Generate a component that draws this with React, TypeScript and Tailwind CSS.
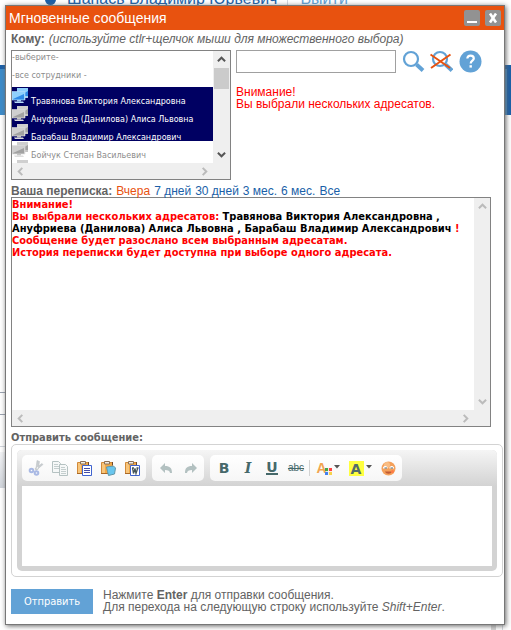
import type { ReactNode } from "react";
import { clsx } from "clsx";

type IconProps = { className?: string };

function Chevron({ dir, className }: { dir: "up" | "down" | "left" | "right"; className?: string }) {
  const points = {
    up: "1,7 5,3 9,7",
    down: "1,3 5,7 9,3",
    left: "7,1 3,5 7,9",
    right: "3,1 7,5 3,9",
  }[dir];
  return (
    <svg viewBox="0 0 10 10" className={clsx("size-[9px]", className)} fill="none" stroke="currentColor" strokeWidth="2.2">
      <polyline points={points} />
    </svg>
  );
}

function ComputersIcon({ online }: { online?: boolean }) {
  const light = online ? "#8fd0fc" : "#cfcfcf";
  const dark = online ? "#2f8ae6" : "#a2a2a2";
  const stand = online ? "#a9cdee" : "#c4c4c4";
  const edge = online ? "#b8defa" : "#dedede";
  return (
    <svg viewBox="0 0 17 18" className="block h-[18px] w-[17px]">
      <path d="M5 1h11v8H5z" fill={light} />
      <path d="M7 9l9-5v5z" fill={dark} />
      <path d="M12 9h4v2h-4z" fill={stand} />
      <path d="M0 4.500h13v8.500H0z" fill={light} stroke={edge} strokeWidth="0.6" />
      <path d="M1 12l11-5v5.500H1z" fill={dark} />
      <path d="M5 13h4v1.500H5z" fill={stand} />
      <path d="M2 14.500h9l1 1.500H3z" fill={edge} />
    </svg>
  );
}

function SearchIcon() {
  return (
    <svg viewBox="0 0 23 23" className="size-[23px]" fill="none" stroke="#62a2d6">
      <circle cx="9" cy="9" r="7" strokeWidth="2.200" />
      <path d="M14.500 14.500L21 20.500" strokeWidth="4" />
    </svg>
  );
}

function ClearSearchIcon() {
  return (
    <svg viewBox="0 0 23 23" className="size-[23px]" fill="none">
      <circle cx="10" cy="9" r="7" stroke="#62a2d6" strokeWidth="2.200" />
      <path d="M15.500 14.500L22 20.500" stroke="#62a2d6" strokeWidth="4" />
      <path d="M0.500 4.500L20 18M20.500 4.500L1 18" stroke="#e8520f" strokeWidth="2" />
    </svg>
  );
}

function HelpIcon() {
  return (
    <svg viewBox="0 0 23 23" className="size-[23px]">
      <circle cx="11.500" cy="11.500" r="11" fill="#62a2d6" />
      <path d="M8.300 8.500C8.500 6.500 9.700 5.700 11.500 5.700c2 0 3.300 1 3.300 2.700 0 2.200-3.100 2.300-3.100 5" fill="none" stroke="#fff" strokeWidth="2.200" />
      <path d="M10.500 15.200h2.400v2.400h-2.400z" fill="#fff" />
    </svg>
  );
}

function CutIcon() {
  return (
    <svg viewBox="0 0 16 16" className="size-4" fill="none">
      <path d="M9 0.500l-1 8 2 1 1.500-8zM15 4.500L8 10.500l-1-2 7-5z" fill="#c9cdd0" stroke="#b9bfc2" strokeWidth="0.500" />
      <circle cx="3.500" cy="10.500" r="1.800" stroke="#a9b9e4" strokeWidth="2" />
      <circle cx="8.500" cy="13" r="1.800" stroke="#a9b9e4" strokeWidth="2" />
    </svg>
  );
}

function CopyIcon() {
  return (
    <svg viewBox="0 0 16 16" className="size-4" fill="#f6f8f8" stroke="#b5c2c2">
      <path d="M0.500 1.500h6l2 2v9h-8z" />
      <path d="M2 4.500h4M2 6.500h5M2 8.500h5" stroke="#c4cece" />
      <path d="M7.500 4.500h6l2 2v9h-8z" />
      <path d="M9 7.500h4M9 9.500h5M9 11.500h5M9 13.500h5" stroke="#c4cece" />
    </svg>
  );
}

function PasteIcon({ kind }: { kind: "text" | "plain" | "word" }) {
  return (
    <svg viewBox="0 0 16 16" className="size-4" fill="none">
      <path d="M1.500 2.500h11v11h-11z" fill="#f0a848" stroke="#d18a3a" />
      <path d="M2 3h3v10H2z" fill="#f8c67c" />
      <path d="M1 13.500h7" stroke="#a96826" />
      <path d="M12.500 2v3" stroke="#6d482d" />
      <path d="M4.500 4V1.500h5V4z" fill="#f4ece0" stroke="#8b7057" />
      {kind === "plain" ? (
        <path d="M6.500 7l7-1 2 2-1 6-6 1.500-1-4z" fill="#69c6ee" stroke="#6197aa" />
      ) : (
        <path d="M6.500 5.500h9v10h-9z" fill="#fff" stroke="#3f63cf" />
      )}
      {kind === "text" && <path d="M8 8.500h6M8 10.500h6M8 12.500h6" stroke="#434ca8" />}
      {kind === "word" && <path d="M8.500 8l1 5.500 1.500-5 1 5L13.800 8M8 8h2M12.500 8h2" stroke="#46555a" strokeWidth="1.300" />}
    </svg>
  );
}

function UndoIcon({ className }: IconProps) {
  return (
    <svg viewBox="0 0 13 11" className={clsx("h-[11px] w-[13px]", className)} fill="#b3c1c1">
      <path d="M0 5l5-5v3c5 0 7 2 7 7h-2c0-2-2-3-5-3v3z" />
    </svg>
  );
}

function SmileIcon() {
  return (
    <svg viewBox="0 0 15 15" className="size-[15px]">
      <circle cx="7.500" cy="7.500" r="7" fill="#f4a05a" />
      <circle cx="6" cy="4" r="3" fill="#f9bd84" />
      <path d="M2 6.500c1-2 3.500-2 4.500 0v1H2zM8.500 6.500c1-2 3.500-2 4.500 0v1H8.500z" fill="#fff" />
      <path d="M3.500 7h2.500M9.500 7h2.500" stroke="#576b70" strokeWidth="1.200" />
      <path d="M4 10.500h7c-1 3-6 3-7 0z" fill="#c05b34" />
      <circle cx="11.500" cy="10.500" r="1.500" fill="#ff7a45" />
    </svg>
  );
}

function Caret() {
  return (
    <svg viewBox="0 0 6 4" className="mb-[3px] h-1 w-1.5">
      <path d="M0 0h6L3 3.500z" fill="#555" />
    </svg>
  );
}

function ToolGroup({ children }: { children: ReactNode }) {
  return (
    <div className="flex h-[26px] items-center rounded-[5px] bg-linear-to-b from-white to-[#f6f6f6] px-0.5">{children}</div>
  );
}

function Tool({ label, wide, children }: { label: string; wide?: boolean; children: ReactNode }) {
  return (
    <button
      type="button"
      aria-label={label}
      title={label}
      className={clsx("flex h-6 items-center justify-center text-[#46696a]", wide ? "w-8 gap-0.5" : "w-6")}
    >
      {children}
    </button>
  );
}

const contacts = [
  { name: "Травянова Виктория Александровна", online: true, selected: true },
  { name: "Ануфриева (Данилова) Алиса Львовна", selected: true },
  { name: "Барабаш Владимир Александрович", selected: true },
  { name: "Бойчук Степан Васильевич" },
];

const periods = ["7 дней", "30 дней", "3 мес.", "6 мес.", "Все"];

const strong = "font-['DejaVu_Sans_Condensed','DejaVu_Sans',sans-serif] text-[11px] font-bold";

function PageBehind() {
  return (
    <div className="absolute inset-0 overflow-hidden bg-white" aria-hidden="true">
      <div className="absolute -top-[11px] left-[45px] flex items-center text-[16px] leading-5 text-[#1a5fa8]">
        <span className="size-[11px] rounded-full bg-[#1a5fa8]" />
        <span className="ml-[11px]">Шапась Владимир Юрьевич</span>
        <span className="ml-2.5 h-5 w-px bg-gray-300" />
        <span className="ml-3 text-[#62a2d6]">Выйти</span>
      </div>
      <div className="absolute inset-x-0 top-[65px] h-[50px] border-t-4 border-[#1a5fa8] bg-[#3b8bca]" />
      <div className="absolute top-[65px] right-0 h-[50px] w-1 bg-[#1a5fa8]" />
      <div className="absolute top-[392px] left-0 h-[23px] w-2 border-y border-gray-400" />
      <div className="absolute top-[446px] left-0 h-px w-2 bg-gray-300" />
      <div className="absolute top-[452px] left-0 h-9 w-2 bg-linear-to-b from-gray-100 to-gray-300" />
      <div className="absolute top-[620px] right-[15px] bottom-0 w-[5px] bg-[#d3d3d3]" />
      <div className="absolute top-[620px] right-2 bottom-0 w-px bg-gray-300" />
    </div>
  );
}

export default function App() {
  return (
    <div className="relative min-h-screen pt-[5px] pr-[6px] pb-[5px] pl-[5px] font-['Liberation_Sans',sans-serif] text-[12px] leading-3 text-[#636363]">
      <PageBehind />
      <section
        role="dialog"
        aria-labelledby="dialog-title"
        className="relative border border-[#777] bg-white shadow-[1px_1px_5px_#666]"
      >
        <header className="flex h-6 items-center bg-[#e8520f] px-[3px]">
          <h1 id="dialog-title" className="flex-1 text-[14px] leading-5 text-white">
            Мгновенные сообщения
          </h1>
          <div className="flex gap-[5px]">
            <button type="button" aria-label="Свернуть" className="flex size-4 items-end justify-center rounded-[2px] bg-[#929292] pb-[3px]">
              <span className="h-0.5 w-2.5 bg-white" />
            </button>
            <button type="button" aria-label="Закрыть" className="flex size-4 items-center justify-center rounded-[2px] bg-[#929292]">
              <svg viewBox="0 0 10 10" className="size-2.5" stroke="#fff" strokeWidth="2.600">
                <path d="M2 0.500L8 9.500M8 0.500L2 9.500" />
              </svg>
            </button>
          </div>
        </header>

        <div className="pt-[3px] pr-px pb-[10px] pl-[5px]">
          <div className="flex gap-1">
            <label htmlFor="recipients" className="font-bold">
              Кому:
            </label>
            <i>(используйте ctlr+щелчок мыши для множественного выбора)</i>
          </div>

          <div className="mt-[5px] flex gap-[5px]">
            <div className="h-[130px] w-[220px] shrink-0 border border-[#828282] bg-[#efefef]">
              <div className="flex h-[112px]">
                <div className="relative h-full min-w-0 flex-1 overflow-hidden bg-white">
                  <select
                    id="recipients"
                    multiple
                    defaultValue={contacts.filter((c) => c.selected).map((c) => c.name)}
                    className="block h-[130px] w-full appearance-none overflow-hidden border-0 bg-white p-0 font-['DejaVu_Sans',sans-serif] text-[8px] text-[#8c8c8c] outline-none"
                  >
                    <option value="none" className="h-[18px] min-h-0 p-0 pt-0.5 leading-3">-выберите-</option>
                    <option value="all" className="h-[18px] min-h-0 p-0 pt-0.5 leading-3">-все сотрудники -</option>
                    {contacts.map((c) => (
                      <option
                        key={c.name}
                        value={c.name}
                        className={clsx(
                          "h-[18px] min-h-0 p-0 pt-2.5 pl-[19px] leading-3",
                          c.selected && "bg-linear-to-b from-[#000062] to-[#000062] [-webkit-text-fill-color:white]",
                        )}
                      >
                        {c.name}
                      </option>
                    ))}
                  </select>
                  <div className="pointer-events-none absolute top-9 left-0">
                    {contacts.map((c) => (
                      <ComputersIcon key={c.name} online={c.online} />
                    ))}
                    <ComputersIcon />
                  </div>
                </div>
                <div className="flex w-[17px] flex-col items-center bg-[#efefef] text-[#555]">
                  <Chevron dir="up" className="mt-1" />
                  <div className="mt-1 h-[21px] w-[15px] bg-[#cbcbcb]" />
                  <Chevron dir="down" className="mt-auto mb-1" />
                </div>
              </div>
              <div className="flex h-4 items-center justify-between pr-[21px] pl-1 text-[#bbb]">
                <Chevron dir="left" />
                <Chevron dir="right" />
              </div>
            </div>

            <div className="flex-1">
              <div className="flex items-center">
                <input type="text" aria-label="Поиск сотрудника" className="h-[23px] w-40 border border-[#a0a0a0] bg-white px-1 outline-none" />
                <button type="button" aria-label="Найти" className="ml-1.5">
                  <SearchIcon />
                </button>
                <button type="button" aria-label="Сбросить поиск" className="ml-[5px]">
                  <ClearSearchIcon />
                </button>
                <button type="button" aria-label="Справка" className="ml-1.5">
                  <HelpIcon />
                </button>
              </div>
              <p className="mt-[13px] text-[#f00]">
                Внимание!
                <br />
                Вы выбрали нескольких адресатов.
              </p>
            </div>
          </div>

          <nav className="mt-[5px] flex gap-1">
            <b>Ваша переписка:</b>
            <a href="#yesterday" className="text-[#e8520f]">
              Вчера
            </a>
            {periods.map((p) => (
              <a key={p} href="#period" className="text-[#1a5fa8]">
                {p}
              </a>
            ))}
          </nav>

          <div className="mr-3 flex h-[230px] flex-col border border-[#828282] bg-[#efefef]">
            <div className="flex flex-1">
              <div className={clsx("flex-1 bg-white pt-px text-[#f00]", strong)}>
                <p>Внимание!</p>
                <p>
                  Вы выбрали нескольких адресатов:{" "}
                  <span className="text-black">
                    Травянова Виктория Александровна ,<br />
                    Ануфриева (Данилова) Алиса Львовна , Барабаш Владимир Александрович
                  </span>{" "}
                  !
                </p>
                <p>Сообщение будет разослано всем выбранным адресатам.</p>
                <p>История переписки будет доступна при выборе одного адресата.</p>
              </div>
              <div className="flex w-4 flex-col items-center justify-between py-1 text-[#bbb]">
                <Chevron dir="up" />
                <Chevron dir="down" />
              </div>
            </div>
            <div className="flex h-4 items-center justify-between pr-5 pl-1 text-[#bbb]">
              <Chevron dir="left" />
              <Chevron dir="right" />
            </div>
          </div>

          <label htmlFor="message" className={clsx("mt-[5px] block", strong)}>
            Отправить сообщение:
          </label>

          <div className="rounded-[5px] border border-[#d3d3d3] p-[5px]">
            <div className="rounded-[5px] bg-[#d3d3d3]">
              <div className="flex h-9 gap-1.5 rounded-t-[5px] bg-linear-to-b from-[#f5f5f5] to-[#d3d3d3] px-[5px] pt-[5px]">
                <ToolGroup>
                  <Tool label="Вырезать"><CutIcon /></Tool>
                  <Tool label="Копировать"><CopyIcon /></Tool>
                  <Tool label="Вставить"><PasteIcon kind="text" /></Tool>
                  <Tool label="Вставить только текст"><PasteIcon kind="plain" /></Tool>
                  <Tool label="Вставить из Word"><PasteIcon kind="word" /></Tool>
                </ToolGroup>
                <ToolGroup>
                  <Tool label="Отменить"><UndoIcon /></Tool>
                  <Tool label="Повторить"><UndoIcon className="-scale-x-100" /></Tool>
                </ToolGroup>
                <ToolGroup>
                  <Tool label="Полужирный"><b className="font-['DejaVu_Sans',sans-serif] text-[14px]">B</b></Tool>
                  <Tool label="Курсив"><b className="font-['DejaVu_Serif',serif] text-[14px] italic">I</b></Tool>
                  <Tool label="Подчеркнутый"><b className="border-b-2 border-[#46696a] font-['DejaVu_Sans',sans-serif] text-[14px] leading-3">U</b></Tool>
                  <Tool label="Зачеркнутый"><s className="text-[10px]">abc</s></Tool>
                  <span className="mx-px h-4 w-0.5 border-l border-[#d3d3d3]" />
                  <Tool label="Цвет текста" wide>
                    <span className="flex items-end">
                      <b className="text-[14px] leading-[14px] text-[#f2a550]">A</b>
                      <svg viewBox="0 0 8 8" className="-ml-0.5 size-[7px]">
                        <path d="M0 0h3.500v3.500H0z" fill="#46a546" />
                        <path d="M4.500 0H8v3.500H4.500z" fill="#f44" />
                        <path d="M0 4.500h3.500V8H0z" fill="#4480f0" />
                        <path d="M4.500 4.500H8V8H4.500z" fill="#f8d34a" />
                      </svg>
                    </span>
                    <Caret />
                  </Tool>
                  <Tool label="Цвет фона" wide>
                    <b className="size-[15px] bg-[#ffff40] font-['DejaVu_Sans',sans-serif] text-[14px] leading-4 text-[#536b6b]">A</b>
                    <Caret />
                  </Tool>
                  <Tool label="Смайлы"><SmileIcon /></Tool>
                </ToolGroup>
              </div>
              <div className="px-[5px] pb-[5px]">
                <textarea id="message" className="block h-20 w-full resize-none bg-white p-1 outline-none" />
              </div>
            </div>
          </div>

          <div className="mt-3 flex gap-2.5">
            <button
              type="submit"
              className="h-[25px] w-[82px] bg-[#62a2d6] font-['DejaVu_Sans_Condensed','DejaVu_Sans',sans-serif] text-[11px] text-white"
            >
              Отправить
            </button>
            <p>
              Нажмите <b>Enter</b> для отправки сообщения.
              <br />
              Для перехода на следующую строку используйте <i>Shift+Enter</i>.
            </p>
          </div>
        </div>
      </section>
    </div>
  );
}
